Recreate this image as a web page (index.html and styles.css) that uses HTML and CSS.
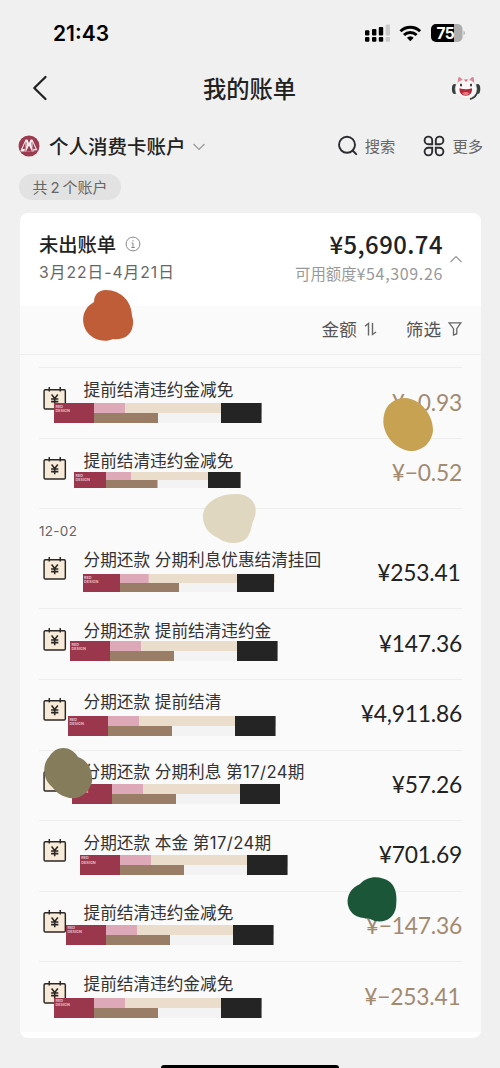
FILE: index.html
```html
<!DOCTYPE html>
<html lang="zh-CN">
<head>
<meta charset="utf-8">
<title>我的账单</title>
<link rel="stylesheet" href="styles.css">
</head>
<body>
<svg class="defs" width="0" height="0">
  <symbol id="bill" viewBox="0 0 24 24">
    <rect x="2" y="3.6" width="20.4" height="18.4" rx="1.2" fill="#f7ead9" stroke="#2b2725" stroke-width="1.4"/>
    <path d="M7 1v4.2M17.5 1v4.2" stroke="#2b2725" stroke-width="1.4"/>
    <path d="M9.2 8.2l3 3.8 3-3.8M8.7 12.5h7M8.7 15h7M12.2 12v5.600" fill="none" stroke="#2b2725" stroke-width="1.5"/>
  </symbol>
</svg>
<div class="screen">
  <header class="status">
    <span class="time">21:43</span>
    <svg width="102" height="20" viewBox="0 0 102 20">
      <g><rect x="1" y="7.3" width="4.4" height="5.2" rx="1"/><rect x="8" y="6" width="4.4" height="6.5" rx="1"/><rect x="14.8" y="4" width="4.4" height="8.5" rx="1"/><rect x="1" y="14" width="4.4" height="4.7" rx="1"/><rect x="8" y="14" width="4.4" height="4.7" rx="1"/><rect x="14.8" y="14" width="4.4" height="4.7" rx="1"/></g>
      <g fill="#cbcbcb"><rect x="21.6" y="1.5" width="4.4" height="11" rx="1"/><rect x="21.6" y="14" width="4.4" height="4.7" rx="1"/></g>
      <g fill="none" stroke="#000" stroke-width="2.9"><path d="M36.5 8.2a14 14 0 0 1 19.6 0"/><path d="M40 12a9 9 0 0 1 12.6 0"/></g>
      <path d="M46.3 18.2l-3.4-3.4a5 5 0 0 1 6.8 0z"/>
      <path d="M72 1h18v18H72a5 5 0 0 1-5-5V6a5 5 0 0 1 5-5z"/>
      <path d="M90 1h3.500a5 5 0 0 1 5 5v8a5 5 0 0 1-5 5H90z" fill="#adadad"/>
      <path d="M99.500 7.500q3 2.500 0 5z" fill="#adadad"/>
      <text x="72.500" y="15.500" class="battery">75</text>
    </svg>
  </header>
  <nav class="nav">
    <svg class="back" width="16" height="26" viewBox="0 0 16 26"><path d="M13.500 2L2.300 13l11.200 11" fill="none" stroke="#222" stroke-width="2.300" stroke-linecap="round" stroke-linejoin="round"/></svg>
    <h1>我的账单</h1>
    <svg class="mascot" width="30" height="26" viewBox="0 0 30 26">
      <ellipse cx="3.600" cy="14" rx="2.700" ry="5" fill="#34423f"/><ellipse cx="26.600" cy="14" rx="2.700" ry="5" fill="#34423f"/>
      <path d="M6.500 9L7.300 2.500q1-2 5 3M23.500 9l-.8-6.500q-1-2-5 3" fill="#dd8397"/>
      <path d="M26 18q-2 5-7 6" fill="none" stroke="#34423f" stroke-width="2"/>
      <ellipse cx="15" cy="14" rx="10.800" ry="9.500" fill="#fdf8f7" stroke="#e3d6d5" stroke-width=".6"/>
      <path d="M13 4.500l2 2.500 2-2.500z" fill="#de6582"/>
      <path d="M8.500 13.300q6.500 1.700 12.500 0c.5 4.500-2 7.500-6.200 7.500s-6.800-3-6.300-7.500z" fill="#b5283c"/>
      <path d="M11 18.300q3.800-2.500 7.500 0-3.500 4-7.500 0z" fill="#e77a7e"/>
      <g fill="#332b30"><ellipse cx="10" cy="10" rx="1" ry="1.600"/><ellipse cx="20" cy="10" rx="1" ry="1.600"/></g>
    </svg>
  </nav>
  <section class="account">
    <svg width="22" height="22" viewBox="0 0 22 22"><circle cx="11" cy="11" r="10.500" fill="#9c3a50"/><path d="M7.600 4.500h1.900L11 8.200l1.500-3.700h1.900l5 10.800h-3.200v1.200H2.600v-1.200z" fill="#f7eef0"/><path d="M7.600 6.500L4.500 14h2.300zM14.400 6.500l3.100 7.500h-2.300zM11 10.500L8 16.500h6z" fill="#9c3a50"/><path d="M8.500 7.500l-1.700 9M13.500 7.500l1.700 9" stroke="#9c3a50" stroke-width=".7"/></svg>
    <h2>个人消费卡账户</h2>
    <svg class="down" width="14" height="10" viewBox="0 0 14 10"><path d="M1.500 2L7 7.500 12.500 2" fill="none" stroke="#999" stroke-width="1.200"/></svg>
    <svg class="find" width="22" height="22" viewBox="0 0 22 22"><circle cx="10" cy="9.800" r="8" fill="none" stroke="#2c2c30" stroke-width="1.900"/><path d="M15.600 15.500l3.600 3.600" stroke="#2c2c30" stroke-width="2" stroke-linecap="round"/></svg>
    <span class="find-label">搜索</span>
    <svg class="more" width="22" height="22" viewBox="0 0 22 22"><g fill="none" stroke="#2c2c30" stroke-width="1.900"><path d="M9.200 9.200H5.400A3.800 3.800 0 1 1 9.200 5.400z"/><path d="M12.800 9.200V5.400a3.800 3.800 0 1 1 3.800 3.800zM9.200 12.800v3.800a3.800 3.800 0 1 1-3.800-3.800zM12.800 12.800h3.800a3.800 3.800 0 1 1-3.800 3.800z"/></g></svg>
    <span class="more-label">更多</span>
  </section>
  <div class="chip">共<span>2</span>个账户</div>
  <main class="card">
    <section class="summary">
      <div>
        <h3>未出账单<svg width="16" height="16" viewBox="0 0 16 16"><circle cx="8" cy="8" r="6.900" fill="none" stroke="#888" stroke-width="1"/><path d="M6.500 7H8v4.300M6.300 11.500h3.500M8 4.200v1.300" fill="none" stroke="#888"/></svg></h3>
        <p class="period">3月22日-4月21日</p>
      </div>
      <div class="total">
        <p class="sum">¥5,690.74</p>
        <p class="limit">可用额度<span>¥54,309.26</span></p>
      </div>
      <svg class="up" width="14" height="10" viewBox="0 0 14 10"><path d="M1.500 8L7 2.500 12.500 8" fill="none" stroke="#999" stroke-width="1.200"/></svg>
    </section>
    <section class="filters">
      <span>金额</span>
      <svg class="sort" width="14" height="16" viewBox="0 0 14 16"><path d="M1 5.200L4.500 2.500v12M8.500 2v11.500L12 11" fill="none" stroke="#666" stroke-width="1.400"/></svg>
      <span>筛选</span>
      <svg class="funnel" width="14" height="16" viewBox="0 0 14 16"><path d="M1 1.800h11.800L8.800 7.700v5L5.500 14V7.700z" fill="none" stroke="#666" stroke-width="1.300"/></svg>
    </section>
    <section class="list">
      <article class="row b1"><svg class="icon"><use href="#bill"/></svg><span class="name">提前结清违约金减免</span><span class="amount refund">¥−0.93</span><div class="bar">RED<br>DESIGN</div></article>
      <article class="row b2"><svg class="icon"><use href="#bill"/></svg><span class="name">提前结清违约金减免</span><span class="amount refund">¥−0.52</span><div class="bar">RED<br>DESIGN</div></article>
      <div class="date">12-02</div>
      <article class="row b3"><svg class="icon"><use href="#bill"/></svg><span class="name">分期还款 分期利息优惠结清挂回</span><span class="amount one">¥253.41</span><div class="bar">RED<br>DESIGN</div></article>
      <article class="row b4"><svg class="icon"><use href="#bill"/></svg><span class="name">分期还款 提前结清违约金</span><span class="amount">¥147.36</span><div class="bar">RED<br>DESIGN</div></article>
      <article class="row b5"><svg class="icon"><use href="#bill"/></svg><span class="name">分期还款 提前结清</span><span class="amount">¥4,911.86</span><div class="bar">RED<br>DESIGN</div></article>
      <article class="row b6"><svg class="icon"><use href="#bill"/></svg><span class="name">分期还款 分期利息 <span class="term">第17/24期</span></span><span class="amount">¥57.26</span><div class="bar">RED<br>DESIGN</div></article>
      <article class="row b7"><svg class="icon"><use href="#bill"/></svg><span class="name">分期还款 本金 <span class="term">第17/24期</span></span><span class="amount">¥701.69</span><div class="bar">RED<br>DESIGN</div></article>
      <article class="row b8"><svg class="icon"><use href="#bill"/></svg><span class="name">提前结清违约金减免</span><span class="amount refund">¥−147.36</span><div class="bar">RED<br>DESIGN</div></article>
      <article class="row b9"><svg class="icon"><use href="#bill"/></svg><span class="name">提前结清违约金减免</span><span class="amount refund one">¥−253.41</span><div class="bar">RED<br>DESIGN</div></article>
    </section>
  </main>
  <div class="home"></div>
  <svg class="blobs" width="500" height="1068" viewBox="0 0 500 1068">
    <path fill="#c05d39" d="M94 302C94 295 98 290 106 290C121 290 132 302 132 316C134 322 133 325 132 329C129 337 122 340 113 339C107 342 100 341 94 338C80 330 79 310 94 302Z"/>
    <path fill="#c6a252" d="M384 415C386 404 395 398 405 398C421 399 433 415 433 430C432 443 422 451 411 451C395 450 380 433 384 415Z"/>
    <path fill="#dfd7c0" d="M203 514C205 501 221 493 238 494C253 495 259 507 254 519C251 525 252 532 246 539C239 545 226 544 218 538C208 534 202 525 203 514Z"/>
    <path fill="#847c5a" d="M49 757C55 746 70 744 78 757C88 760 93 771 92 782C88 795 77 801 66 797C56 794 54 788 50 785C43 778 42 765 49 757Z"/>
    <path fill="#1b5639" d="M360 884C367 876 380 875 390 882C397 888 397 898 396 907C394 920 381 925 370 919C368 918 366 919 364 918C345 917 341 892 360 884Z"/>
  </svg>
</div>
</body>
</html>
```

FILE: styles.css
```css
* { box-sizing: border-box; }
body { margin: 0; background: #f0f0f0; color: #222; font-family: "Liberation Sans", "Noto Sans CJK SC", sans-serif; }
h1, h2, h3, p { margin: 0; }
svg { display: block; flex: none; }
.defs { position: absolute; }
.screen { position: relative; width: 500px; height: 1068px; overflow: hidden; display: flex; flex-direction: column; }
.screen > * { flex: none; }

.status { height: 56px; padding: 23px 34px 0 53px; display: flex; justify-content: space-between; align-items: flex-start; color: #000; }
.time { font: 600 21px/22px Inter, sans-serif; }
.battery { font: 700 15.500px Inter, sans-serif; fill: #fff; letter-spacing: -0.5px; }

.nav { height: 65px; padding: 0 19px 1px 32px; display: flex; justify-content: space-between; align-items: center; }
.nav h1 { font: 500 23.300px/30px "Noto Sans CJK SC", sans-serif; padding-bottom: 1px; }

.account { height: 50px; padding-left: 18px; display: flex; align-items: center; }
.account h2 { font: 500 19.500px/28px "Noto Sans CJK SC", sans-serif; margin-left: 9px; }
.down { margin: 1px 0 0 6px; }
.find { margin-left: auto; }
.find-label, .more-label { font: 400 15.300px/22px "Noto Sans CJK SC", sans-serif; color: #666; padding-bottom: 2px; }
.find-label { margin: 0 28px 0 6px; }
.more-label { margin: 0 17px 0 7px; }
.chip { width: 102px; height: 26px; margin: 3px 0 0 19px; border-radius: 13px; background: #e2e2e2; color: #666; font: 400 15px/27px Inter, "Noto Sans CJK SC", sans-serif; text-align: center; }
.chip span { margin: 0 3px; }

.card { width: 461.500px; height: 825px; margin: 13px 0 0 19.500px; border-radius: 8px; background: #fff; overflow: hidden; }
.summary { height: 92.500px; padding: 17px 18px 0 19.500px; display: flex; }
.summary h3 { display: flex; align-items: center; gap: 9px; font: 500 19.300px/28px "Noto Sans CJK SC", sans-serif; }
.period { font: 400 15.700px/24px Inter, "Noto Sans CJK SC", sans-serif; color: #666; margin-top: 3px; letter-spacing: 1px; }
.total { margin-left: auto; text-align: right; }
.sum { font: 500 23.900px/28px "Noto Sans CJK SC", sans-serif; letter-spacing: 0.450px; }
.limit { font: 400 15.400px/22px "Noto Sans CJK SC", sans-serif; color: #999; margin-top: 4px; }
.limit span { font-size: 16px; letter-spacing: 0.65px; }
.up { margin: 24px 0 0 6px; }
.filters { height: 49px; border-bottom: 1px solid #ededed; background: #fafafa; display: flex; justify-content: flex-end; align-items: center; padding: 0 19px 2px 0; font: 400 17.600px/24px "Noto Sans CJK SC", sans-serif; color: #555; }
.sort { margin: 0 28px 0 7px; }
.funnel { margin-left: 7px; }

.list { height: 677px; padding: 12.800px 19px 0 19.500px; background: #fafafa; }
.row { position: relative; height: 70.600px; border-top: 1px solid #ededed; display: flex; align-items: flex-start; }
.icon { width: 25px; height: 25px; margin: 17.300px 0 0 2.500px; }
.name { margin: 9.700px 0 0 17px; font: 400 16.650px/24px Inter, "Noto Sans CJK SC", sans-serif; color: #333; white-space: nowrap; }
.term { letter-spacing: 0.4px; }
.amount { margin: 18.300px 0 0 auto; font: 400 22.800px/30px Lato, sans-serif; color: #222; letter-spacing: -0.2px; }
.one { padding-right: 1.500px; }
.refund { color: #a28a71; }
.date { height: 29.300px; padding-top: 12.500px; border-top: 1px solid #ededed; font: 400 13.500px/18px Inter, sans-serif; color: #666; letter-spacing: 0.3px; }
.date + .row { border-top-color: transparent; }

.bar {
  position: absolute; width: 208px; height: 20px; margin-top: -0.6px; padding: 1.500px;
  background:
    linear-gradient(#242424, #242424) 100% 0 / 19.500% 100% no-repeat,
    linear-gradient(#9b374d, #9b374d) 0 0 / 19.300% 100% no-repeat,
    linear-gradient(#dda9b8, #dda9b8) 0 0 / 34.200% 50% no-repeat,
    linear-gradient(#eaddcb, #eaddcb) 0 0 / 100% 50% no-repeat,
    linear-gradient(#997d66, #997d66) 0 100% / 50% 50% no-repeat,
    #f3f3f3;
  color: #e3bdc5; font: 700 3.800px/4.200px Inter, sans-serif;
}
.b1 .bar { left: 15px; top: 35.500px; }
.b2 .bar { left: 35px; top: 34px; width: 167px; height: 16px; }
.b3 .bar { left: 43.500px; top: 36px; width: 192px; height: 18.300px; }
.b4 .bar { left: 31px; top: 32.500px; }
.b5 .bar { left: 29px; top: 36.700px; }
.b6 .bar { left: 33.300px; top: 34px; }
.b7 .bar { left: 40.800px; top: 34.300px; }
.b8 .bar { left: 27px; top: 33.500px; }
.b9 .bar { left: 15px; top: 36px; }

.home { width: 178px; height: 6px; margin: 27px auto 0 161px; border-radius: 3px; background: #000; }
.blobs { position: absolute; left: 0; top: 0; }
```
